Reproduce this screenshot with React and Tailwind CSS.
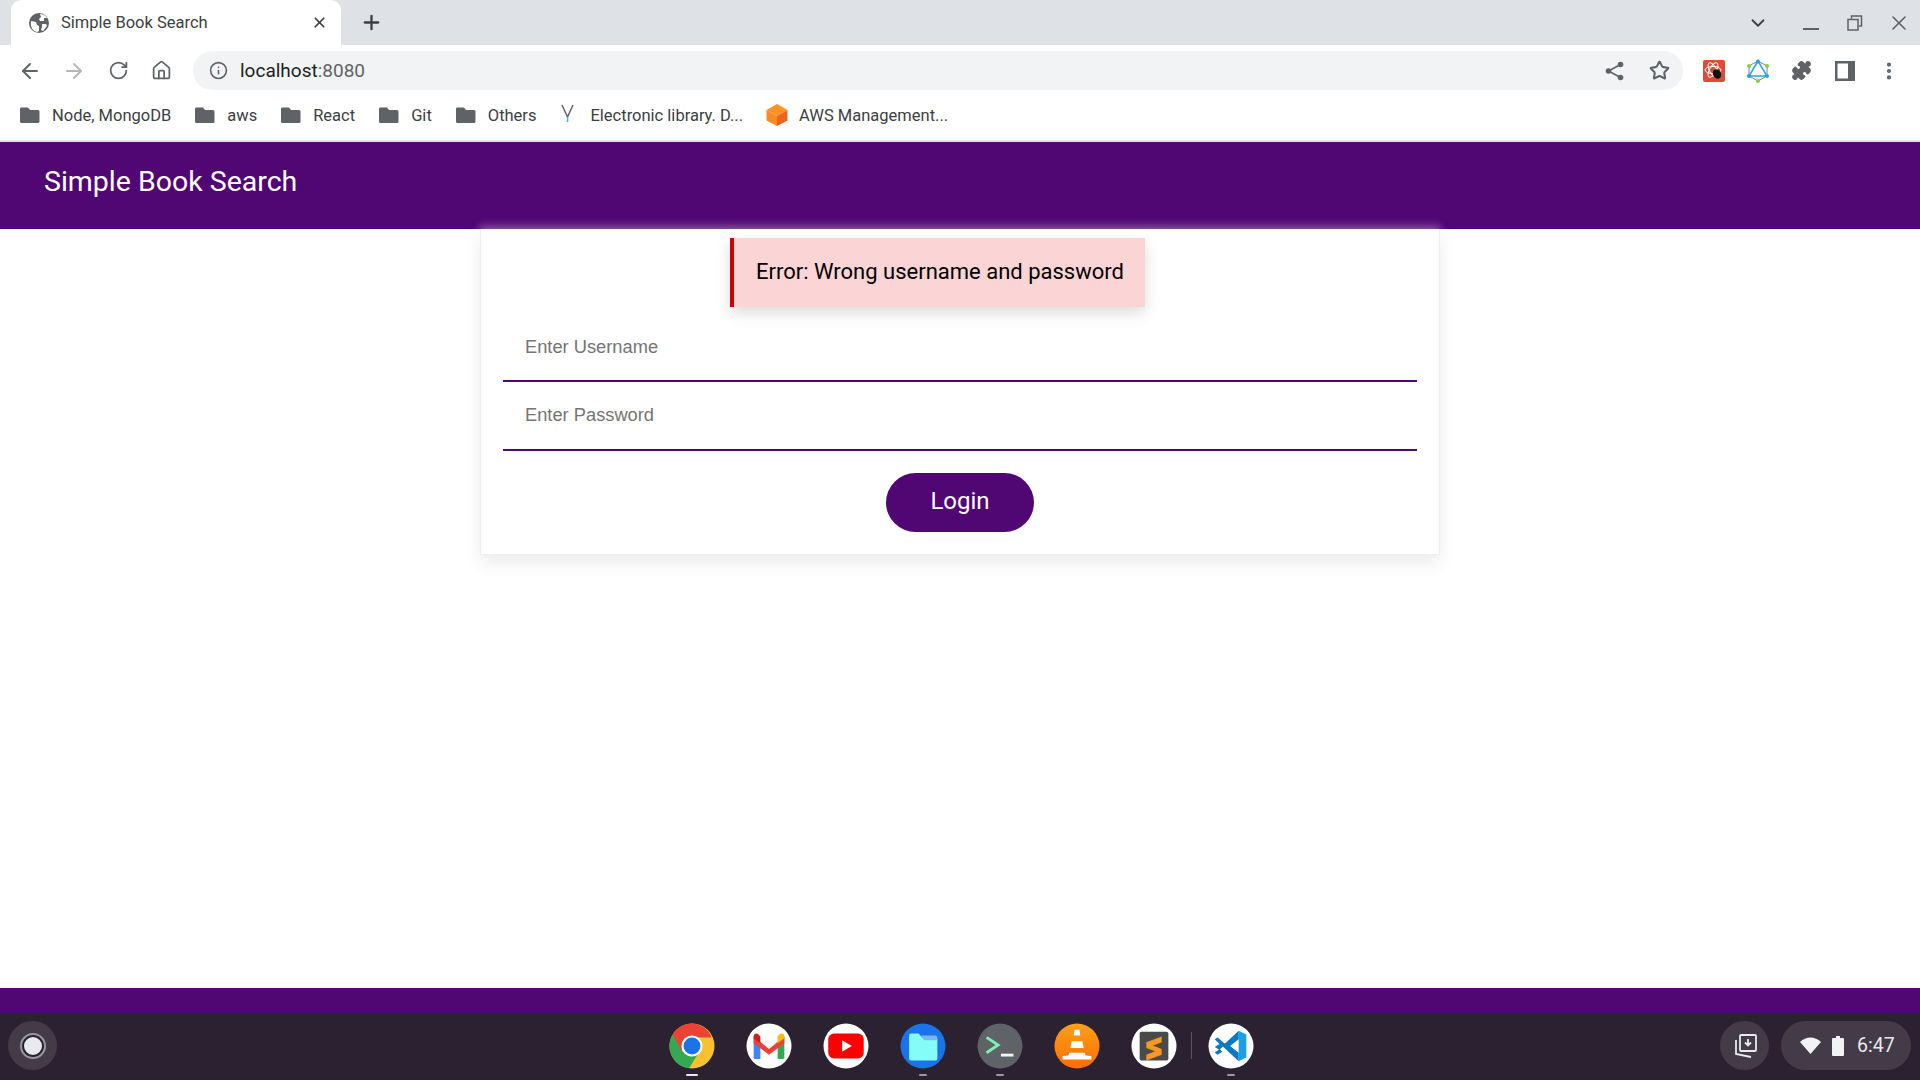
import { ArrowLeft, ArrowRight, RotateCw, Home, Info, Star, ChevronDown, X, Plus, Puzzle, MoreVertical } from "lucide-react";

const bookmarks = ["Node, MongoDB", "aws", "React", "Git", "Others"];

function Folder() {
  return (
    <svg width="20" height="20" viewBox="0 0 20 20" className="shrink-0">
      <path d="M2 2.500h6l2 2.500h8a1.500 1.500 0 0 1 1.500 1.500v10a1.500 1.500 0 0 1-1.500 1.500H1.500A1.500 1.500 0 0 1 0 16.500V4a1.500 1.500 0 0 1 2-1.500z" fill="#5f6368" />
    </svg>
  );
}

function Globe() {
  return (
    <svg width="20" height="20" viewBox="0 0 20 20">
      <circle cx="10" cy="10" r="10" fill="#5f6368" />
      <path d="M2 8l5 1 1 3 2 1v5l-2 1c-4-1-7-5-6-11zM11 1c3 0 5 1 7 4h-3v3h-4l-1-2 2-2zM13 11h4l1 2-4 5-2-1 1-3z" fill="#fff" />
    </svg>
  );
}

function ShareIcon() {
  return (
    <svg className="ml-auto" width="20" height="20" viewBox="0 0 20 20" fill="#5f6368">
      <circle cx="15.500" cy="3.500" r="2.800" />
      <circle cx="15.500" cy="16.500" r="2.800" />
      <circle cx="3.500" cy="10" r="2.800" />
      <path d="M15.500 3.500L3.500 10l12 6.500" fill="none" stroke="#5f6368" strokeWidth="1.600" />
    </svg>
  );
}

function DockItem({ children, dot }) {
  return (
    <div className="relative w-[46px] h-[46px] rounded-full flex items-center justify-center">
      {children}
      {dot && <span className={`absolute -bottom-[7px] left-1/2 -translate-x-1/2 h-[2px] rounded ${dot}`} />}
    </div>
  );
}

function ChromeIcon() {
  return (
    <svg width="46" height="46" viewBox="0 0 48 48">
      <circle cx="24" cy="24" r="23.500" fill="#fbc02d" />
      <path d="M24 .5A23.500 23.500 0 0 0 3.600 12.300L13 30l11-15h20.600A23.500 23.500 0 0 0 24 .5z" fill="#ea4335" />
      <path d="M3.600 12.300A23.500 23.500 0 0 0 21 47.300L31 31 14 30z" fill="#34a853" />
      <circle cx="24" cy="24" r="11" fill="#fff" />
      <circle cx="24" cy="24" r="8.800" fill="#1a73e8" />
    </svg>
  );
}

function GmailIcon() {
  return (
    <svg width="46" height="46" viewBox="0 0 48 48">
      <circle cx="24" cy="24" r="23.500" fill="#fff" />
      <path d="M8 14v22a1.500 1.500 0 0 0 1.500 1.500H15V20z" fill="#4285f4" />
      <path d="M40 14v22a1.500 1.500 0 0 1-1.500 1.500H33V20z" fill="#34a853" />
      <path d="M8 14l16 13 16-13v7L24 33 8 21z" fill="#ea4335" />
      <path d="M8 14c0-3 3-4 5-2l2 2v7l-7-5z" fill="#c5221f" />
      <path d="M40 14c0-3-3-4-5-2l-2 2v7l7-5z" fill="#fbbc04" />
    </svg>
  );
}

function YoutubeIcon() {
  return (
    <svg width="46" height="46" viewBox="0 0 48 48">
      <circle cx="24" cy="24" r="23.500" fill="#fff" />
      <rect x="5.500" y="11" width="37" height="26" rx="6" fill="#ff0000" />
      <path d="M20 18l10 6-10 6z" fill="#fff" />
    </svg>
  );
}

function FilesIcon() {
  return (
    <svg width="46" height="46" viewBox="0 0 48 48">
      <circle cx="24" cy="24" r="23.500" fill="#1a73e8" />
      <path d="M9.500 13a2 2 0 0 1 2-2h8l3.500 4H37a2 2 0 0 1 2 2v20a2 2 0 0 1-2 2H11.500a2 2 0 0 1-2-2z" fill="#84fcf8" />
      <path d="M22 13h15a2 2 0 0 1 2 2v3H25z" fill="#7fb2f5" />
    </svg>
  );
}

function TerminalIcon() {
  return (
    <svg width="46" height="46" viewBox="0 0 48 48">
      <circle cx="24" cy="24" r="23.500" fill="#5f6368" />
      <path d="M10 15l12 8-12 8" fill="none" stroke="#7df0b8" strokeWidth="3" />
      <rect x="25" y="32" width="13" height="3" fill="#f1f3f4" />
    </svg>
  );
}

function VlcIcon() {
  return (
    <svg width="46" height="46" viewBox="0 0 48 48">
      <defs>
        <linearGradient id="vlcbg" x1="0" y1="0" x2="0" y2="1">
          <stop offset="0" stopColor="#f9a01b" />
          <stop offset="1" stopColor="#ff6d00" />
        </linearGradient>
      </defs>
      <circle cx="24" cy="24" r="23.500" fill="url(#vlcbg)" />
      <path d="M21.500 7h5l1 6h-7zM18.500 19h11l1.600 7H17zM16 31h16l1 3 6 .5V38H9v-3.500l6-.5z" fill="#fff" />
    </svg>
  );
}

function SublimeIcon() {
  return (
    <svg width="46" height="46" viewBox="0 0 48 48">
      <circle cx="24" cy="24" r="23.500" fill="#fff" />
      <rect x="9" y="9" width="30" height="30" rx="2" fill="#4a4a4a" />
      <path d="M16 20l16-6v6l-9 3.500 9 3.500v6l-16 6v-6l9-3.500-9-3.500z" fill="#f89822" />
    </svg>
  );
}

function VscodeIcon() {
  return (
    <svg width="46" height="46" viewBox="0 0 48 48">
      <circle cx="24" cy="24" r="23.500" fill="#fff" />
      <path d="M32 8l8 4v24l-8 4z" fill="#1d9ee9" />
      <path d="M32 8L15 24l17 16v-9L23 24l9-7z" fill="#0a78c2" />
      <path d="M7 17l3-2 8 7-3 3-3 3-5-3 5-3z M7 31l5-4 3 3-5 3z" fill="#0a78c2" />
    </svg>
  );
}

export default function App() {
  return (
    <div className="w-full h-[1080px] flex flex-col overflow-hidden bg-white font-['Roboto',sans-serif]">
      {/* tab strip */}
      <div className="h-[45px] shrink-0 bg-[#dee1e6] flex items-end pl-[11px] pr-[9px]">
        <div className="relative w-[330px] h-[45px] bg-white rounded-t-[10px] flex items-center pl-[18px] pr-[13px]">
          <Globe />
          <span className="ml-3 mt-[1px] text-[16.500px] text-[#3c4043]">Simple Book Search</span>
          <X className="ml-auto text-[#3c4043]" size={17} strokeWidth={2.400} />
        </div>
        <Plus className="ml-[19px] mb-[11px] text-[#3c4043]" size={23} strokeWidth={2.400} />
        <div className="ml-auto flex items-center h-[45px]">
          <ChevronDown className="text-[#3c4043]" size={22} strokeWidth={2} />
          <span className="ml-[34px] mt-[13px] w-[16px] h-[2px] bg-[#5f6368]" />
          <svg className="ml-[28px]" width="16" height="16" viewBox="0 0 16 16" fill="none" stroke="#5f6368" strokeWidth="1.500">
            <path d="M4.500 3.500V1h10v10H12M1 4.500h10v10.500H1z" />
          </svg>
          <X className="ml-[24px] text-[#5f6368]" size={24} strokeWidth={1.600} />
        </div>
      </div>

      {/* toolbar */}
      <div className="h-[45px] shrink-0 bg-white flex items-start pt-[6px]">
        <div className="flex items-center h-[39px] w-[193px] pl-[18px] text-[#5f6368]">
          <ArrowLeft size={24} strokeWidth={2} />
          <ArrowRight className="ml-[20px] text-[#b5b7ba]" size={24} strokeWidth={2} />
          <RotateCw className="ml-[22px]" size={21} strokeWidth={2} />
          <Home className="ml-[22px]" size={21} strokeWidth={2} />
        </div>
        <div className="w-[1490px] h-[39px] bg-[#f1f3f4] rounded-full flex items-center pl-[16px] pr-[13px] text-[#5f6368]">
          <Info size={19} strokeWidth={2} />
          <span className="ml-[12px] mt-[1px] text-[19px] text-[#202124]">localhost<span className="text-[#5f6368]">:8080</span></span>
          <ShareIcon />
          <Star className="ml-[24px]" size={21} strokeWidth={2.400} />
        </div>
        <div className="flex items-center h-[39px] ml-[20px]">
          <svg width="22" height="22" viewBox="0 0 22 22">
            <rect width="22" height="22" rx="2" fill="#e04a3b" />
            <g fill="none" stroke="#fff" strokeWidth="1">
              <ellipse cx="10" cy="10" rx="8" ry="3.500" />
              <ellipse cx="10" cy="10" rx="8" ry="3.500" transform="rotate(60 10 10)" />
              <ellipse cx="10" cy="10" rx="8" ry="3.500" transform="rotate(120 10 10)" />
            </g>
            <ellipse cx="14" cy="14" rx="4" ry="5" fill="#111" transform="rotate(-30 14 14)" />
          </svg>
          <svg className="ml-[22px]" width="22" height="24" viewBox="0 0 22 24">
            <path d="M11 2l9 5v10l-9 5-9-5V7z" fill="none" stroke="#5f6368" strokeWidth="0.800" />
            <path d="M11 2L2 17h18z" fill="none" stroke="#2f9fe0" strokeWidth="1.500" />
            <circle cx="11" cy="2.500" r="2" fill="#2f9fe0" />
            <circle cx="2" cy="17" r="2" fill="#2f9fe0" />
            <circle cx="20" cy="17" r="2" fill="#2f9fe0" />
            <circle cx="2" cy="7" r="2" fill="#7fd04f" />
            <circle cx="20" cy="7" r="2" fill="#7fd04f" />
            <circle cx="11" cy="22" r="2" fill="#7fd04f" />
          </svg>
          <Puzzle className="ml-[22px] text-[#5f6368]" fill="#5f6368" size={21} strokeWidth={1.500} />
          <svg className="ml-[23px]" width="20" height="20" viewBox="0 0 20 20">
            <path d="M0 0h20v20H0zM2.500 2.500v15H13v-15z" fill="#5f6368" fillRule="evenodd" />
          </svg>
          <MoreVertical className="ml-[23px] text-[#5f6368]" size={22} strokeWidth={2.600} />
        </div>
      </div>

      {/* bookmarks */}
      <div className="h-[50px] shrink-0 bg-white flex items-center pl-[20px] text-[16.500px] text-[#3c4043]">
        {bookmarks.map((name) => (
          <div key={name} className="flex items-center gap-3 mr-[24px]">
            <Folder />
            <span className="mt-[2px]">{name}</span>
          </div>
        ))}
        <div className="flex items-center gap-[15px] mr-[22px]">
          <svg width="15" height="22" viewBox="0 0 15 22">
            <path d="M2 1l5.500 12L13 1" fill="none" stroke="#5f6368" strokeWidth="1.500" />
            <rect x="6.800" y="13" width="1.500" height="5" fill="#4fb3d9" />
          </svg>
          <span className="mt-[2px]">Electronic library. D...</span>
        </div>
        <div className="flex items-center gap-[10px]">
          <svg width="24" height="24" viewBox="0 0 24 24">
            <path d="M12 1l10.500 6L12 13 1.500 7z" fill="#ff9326" />
            <path d="M1.500 7L12 13v10L1.500 17.500z" fill="#fb8a1f" />
            <path d="M22.500 7L12 13v10l10.500-5.500z" fill="#ec6321" />
          </svg>
          <span className="mt-[2px]">AWS Management...</span>
        </div>
      </div>
      <div className="h-[2px] shrink-0 bg-[#e3e3e3]" />

      {/* app header */}
      <header className="h-[87px] shrink-0 bg-[#510773] flex items-center pl-[44px] pb-[6px]">
        <span className="text-[28.500px] text-white">Simple Book Search</span>
      </header>

      {/* page */}
      <main className="flex-1 flex flex-col items-center bg-white">
        <div className="relative z-10 w-[960px] h-[326px] bg-white border border-[#efefef] border-t-0 flex flex-col px-[22px] shadow-[0_8px_16px_rgba(0,0,0,0.08),0_-3px_8px_rgba(255,255,255,0.35)]">
          <div className="self-start ml-[227px] mt-[9px] w-[415px] h-[69px] bg-[#fbd5d5] border-l-4 border-[#d00000] flex items-center pl-[22px] pb-[2px] text-[22px] text-black shadow-[0_6px_14px_rgba(0,0,0,0.14)]">
            Error: Wrong username and password
          </div>
          <input
            placeholder="Enter Username"
            className="w-full h-[75px] px-[22px] pt-[6px] pb-0 border-b-2 border-[#510773] outline-none text-[18.300px] font-['Liberation_Sans',sans-serif] placeholder:text-[#757575]"
          />
          <input
            placeholder="Enter Password"
            className="w-full h-[69px] px-[22px] pb-[2px] border-b-2 border-[#510773] outline-none text-[18.300px] font-['Liberation_Sans',sans-serif] placeholder:text-[#757575]"
          />
          <button className="self-center mt-[22px] w-[148px] h-[59px] rounded-[30px] bg-[#510773] text-white text-[24px] pb-[4px]">
            Login
          </button>
        </div>
      </main>

      {/* footer bar */}
      <div className="h-[25px] shrink-0 bg-[#510773]" />

      {/* chromeos shelf */}
      <div className="h-[67px] shrink-0 bg-[#2b2130] flex items-center justify-between pl-[8px] pr-[9px] pb-[2px]">
        <div className="w-[49px] h-[49px] rounded-full bg-[#433b48] flex items-center justify-center">
          <span className="w-[22px] h-[22px] rounded-full bg-[#e8eaed] border-[2px] border-[#2b2130] outline-[2px] outline-[#9a96a0]" />
        </div>
        <div className="flex items-center gap-[31px] ml-[145px]">
          <DockItem dot="w-[12px] bg-[#e8eaed]"><ChromeIcon /></DockItem>
          <DockItem><GmailIcon /></DockItem>
          <DockItem><YoutubeIcon /></DockItem>
          <DockItem dot="w-[8px] bg-[#9d97a3]"><FilesIcon /></DockItem>
          <DockItem dot="w-[8px] bg-[#9d97a3]"><TerminalIcon /></DockItem>
          <DockItem><VlcIcon /></DockItem>
          <div className="relative">
            <DockItem><SublimeIcon /></DockItem>
            <span className="absolute left-[60px] top-[9px] w-[1px] h-[27px] bg-[#5a525f]" />
          </div>
          <DockItem dot="w-[8px] bg-[#9d97a3]"><VscodeIcon /></DockItem>
        </div>
        <div className="flex items-center gap-3">
          <div className="w-[49px] h-[49px] rounded-full bg-[#433b48] flex items-center justify-center">
            <svg width="26" height="26" viewBox="0 0 26 26" fill="none" stroke="#e8eaed" strokeWidth="1.800">
              <rect x="8" y="2" width="16" height="16" rx="1" />
              <path d="M4 7v14l15 3M16 6v6M13 9.500l3 3 3-3" />
            </svg>
          </div>
          <div className="w-[130px] h-[49px] rounded-full bg-[#433b48] flex items-center pl-[19px] text-[19.500px] text-[#e8eaed]">
            <svg width="21" height="17" viewBox="0 0 21 17"><path d="M0 5c6-6 15-6 21 0L10.500 17z" fill="#f1f3f4" /></svg>
            <svg className="ml-[11px]" width="12" height="20" viewBox="0 0 12 20"><path d="M4 0h4v2h3a1 1 0 0 1 1 1v16a1 1 0 0 1-1 1H1a1 1 0 0 1-1-1V3a1 1 0 0 1 1-1h3z" fill="#f1f3f4" /></svg>
            <span className="ml-[13px]">6:47</span>
          </div>
        </div>
      </div>
    </div>
  );
}
